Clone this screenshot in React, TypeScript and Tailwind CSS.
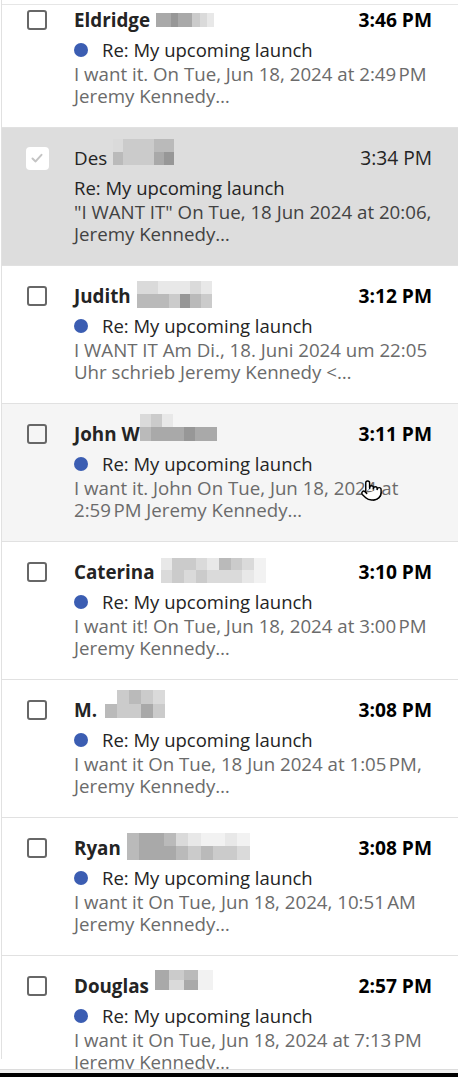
import React from "react";
import { Pointer } from "lucide-react";

const shade: Record<string, string> = {
  a: "bg-[#979797]",
  b: "bg-[#a9a9a9]",
  c: "bg-[#bababa]",
  d: "bg-[#cbcbcb]",
  e: "bg-[#dadada]",
  f: "bg-[#e8e8e8]",
  g: "bg-[#f2f2f2]",
  w: "bg-transparent",
};

type Mos = { left: number; dy: number; w: number; h: number; rows: string[] };

function Mosaic({ m }: { m: Mos }) {
  return (
    <div
      className="flex flex-col"
      style={{ marginLeft: m.left, width: m.w, height: m.h, transform: `translateY(${m.dy}px)` }}
    >
      {m.rows.map((r, i) => (
        <div key={i} className="flex flex-1">
          {r.split("").map((c, j) => (
            <div key={j} className={"flex-1 " + shade[c]} />
          ))}
        </div>
      ))}
    </div>
  );
}

type Mail = {
  name: string;
  time: string;
  unread: boolean;
  state?: "selected" | "hover";
  mosaic: Mos;
  lines: [string, string];
};

const NB = "\u202F";

const mails: Mail[] = [
  {
    name: "Eldridge",
    time: "3:46 PM",
    unread: true,
    mosaic: { left: 6, dy: 0, w: 58, h: 14, rows: ["bbabbdef"] },
    lines: [`I want it. On Tue, Jun 18, 2024 at 2:49${NB}PM`, "Jeremy Kennedy…"],
  },
  {
    name: "Des",
    time: "3:34 PM",
    unread: false,
    state: "selected",
    mosaic: { left: 6, dy: -6, w: 61, h: 26, rows: ["edddcc", "cdddba"] },
    lines: [`"I WANT IT" On Tue, 18 Jun 2024 at 20:06,`, "Jeremy Kennedy…"],
  },
  {
    name: "Judith",
    time: "3:12 PM",
    unread: true,
    mosaic: { left: 6, dy: -2, w: 75, h: 27, rows: ["eefffef", "cccdacd"] },
    lines: ["I WANT IT Am Di., 18. Juni 2024 um 22:05", "Uhr schrieb Jeremy Kennedy <…"],
  },
  {
    name: "John W",
    time: "3:11 PM",
    unread: true,
    state: "hover",
    mosaic: { left: 0, dy: -7, w: 77, h: 27, rows: ["edfwwww", "cbbbabb"] },
    lines: ["I want it. John On Tue, Jun 18, 2024 at", `2:59${NB}PM Jeremy Kennedy…`],
  },
  {
    name: "Caterina",
    time: "3:10 PM",
    unread: true,
    mosaic: { left: 6, dy: -2, w: 105, h: 25, rows: ["fddefcdeg", "ededeeefg"] },
    lines: [`I want it! On Tue, Jun 18, 2024 at 3:00${NB}PM`, "Jeremy Kennedy…"],
  },
  {
    name: "M.",
    time: "3:08 PM",
    unread: true,
    mosaic: { left: 8, dy: -6, w: 60, h: 28, rows: ["wdcde", "cddbd"] },
    lines: [`I want it On Tue, 18 Jun 2024 at 1:05${NB}PM,`, "Jeremy Kennedy…"],
  },
  {
    name: "Ryan",
    time: "3:08 PM",
    unread: true,
    mosaic: { left: 6, dy: -2, w: 123, h: 27, rows: ["cbbcefggfg", "cbbbcdcdde"] },
    lines: [`I want it On Tue, Jun 18, 2024, 10:51${NB}AM`, "Jeremy Kennedy…"],
  },
  {
    name: "Douglas",
    time: "2:57 PM",
    unread: true,
    mosaic: { left: 6, dy: -6, w: 58, h: 20, rows: ["bdcg", "bebg"] },
    lines: [`I want it On Tue, Jun 18, 2024 at 7:13${NB}PM`, "Jeremy Kennedy…"],
  },
];

function Check({ selected }: { selected: boolean }) {
  if (selected) {
    return (
      <div className="w-[23px] h-[23px] rounded-[4px] bg-white flex items-center justify-center">
        <svg width="14" height="14" viewBox="0 0 14 14">
          <path d="M2.5 7.5 L5.6 10.4 L11.5 3.8" fill="none" stroke="#c4c4c4" strokeWidth="2" strokeLinecap="round" strokeLinejoin="round" />
        </svg>
      </div>
    );
  }
  return <div className="w-[20px] h-[20px] rounded-[3px] border-2 border-[#676767]" />;
}

function Row({ m }: { m: Mail }) {
  const bg = m.state === "selected" ? "bg-[#dddddd]" : m.state === "hover" ? "bg-[#f5f5f5]" : "bg-white";
  const selected = m.state === "selected";
  return (
    <div className={"relative flex h-[138px] border-b border-[#e1e1e1] pl-[23px] pr-[26px] " + bg}>
      <div className="w-[24px] h-[24px] mt-[18px] mr-[25px] flex items-center justify-center shrink-0">
        <Check selected={selected} />
      </div>
      <div className="flex-1 min-w-0 pt-[15px]">
        <div className="flex items-center justify-between h-[30px]">
          <div className="flex items-center">
            <span className={"text-[18.8px] text-[#242424] " + (m.unread ? "font-bold" : "font-normal")}>{m.name}</span>
            <Mosaic m={m.mosaic} />
          </div>
          <span className={"text-[19.2px] " + (m.unread ? "font-bold text-black" : "font-normal text-[#242424]")}>{m.time}</span>
        </div>
        <div className="flex items-center h-[30px]">
          {m.unread && <div className="w-[14px] h-[14px] rounded-full bg-[#3b5db2] mr-[14px] shrink-0" />}
          <span className="text-[18.5px] text-[#242424]">Re: My upcoming launch</span>
        </div>
        <div className={"mt-[-2px] text-[18.7px] leading-[22px] whitespace-nowrap " + (selected ? "text-[#424242]" : "text-[#6b6b6b]")}>
          <div>{m.lines[0]}</div>
          <div>{m.lines[1]}</div>
        </div>
      </div>
      {m.state === "hover" && (
        <div className="absolute left-[358px] top-[75px]">
          <Pointer size={23} strokeWidth={1.5} color="#000" fill="#fff" />
        </div>
      )}
    </div>
  );
}

export default function App() {
  return (
    <div className="w-[458px] h-[1077px] bg-white flex flex-col" style={{ fontFamily: '"Open Sans", "Noto Sans", sans-serif' }}>
      <div className="relative h-[1069px] overflow-hidden pl-[1px]">
        <div className="h-full border-l border-[#e1e1e1]">
          <div className="mt-[-10px]">
            {mails.map((m, i) => (
              <Row key={i} m={m} />
            ))}
          </div>
        </div>
        <div className="absolute left-[2px] right-0 top-[4px] h-[1px] bg-[#e6e6e6]" />
      </div>
      <div className="h-[1px] bg-[#dcdcdc]" />
      <div className="h-[3px] bg-[#f0f0f0]" />
      <div className="flex-1 bg-black" />
    </div>
  );
}
